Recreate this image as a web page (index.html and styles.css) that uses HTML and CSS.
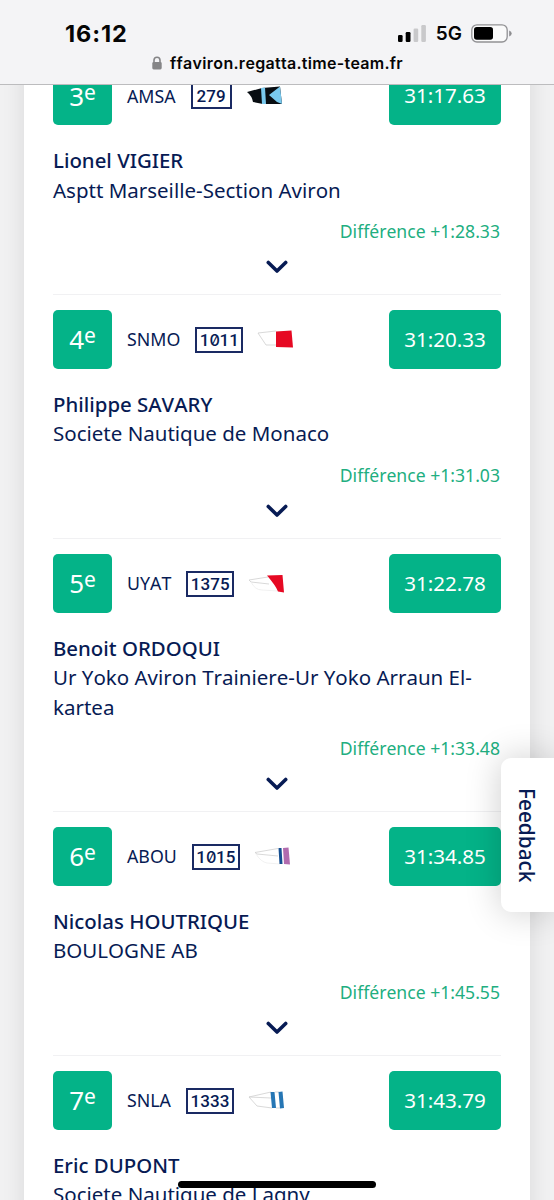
FILE: index.html
```
<!DOCTYPE html>
<html lang="fr">
<head>
<meta charset="utf-8">
<title>Résultats</title>
<link rel="stylesheet" href="styles.css">
</head>
<body>
<div class="screen">
  <header class="browser-bar">
    <div class="status">
      <span class="clock">16:12</span>
      <div class="indicators">
        <svg class="signal" width="28" height="17" viewBox="0 0 28 17"><rect x="0" y="10" width="4.6" height="7" rx="1.2"/><rect x="7.7" y="7" width="4.8" height="10" rx="1.2"/><rect x="15.6" y="3.5" width="4.6" height="13.500" rx="1.2" fill="#c9c9cb"/><rect x="23.300" y="0" width="4.600" height="17" rx="1.2" fill="#c9c9cb"/></svg>
        <span class="network">5G</span>
        <svg class="battery" width="41" height="19" viewBox="0 0 41 19"><rect x=".8" y=".8" width="35.400" height="17.200" rx="5.200" fill="#fafafa" stroke="#919194" stroke-width="1.300"/><rect x="3" y="3" width="19" height="12.800" rx="2.800"/><path d="M38.200 6.500q2.500 1 2.500 3t-2.500 3z" fill="#8d8d90"/></svg>
      </div>
    </div>
    <div class="address">
      <svg width="10" height="14" viewBox="0 0 10 14"><path d="M2 7V4.200a3 3 0 0 1 6 0V7" fill="none" stroke="#858587" stroke-width="1.600"/><rect x=".3" y="6" width="9.400" height="7.500" rx="1.400" fill="#858587"/></svg>
      <span class="url">ffaviron.regatta.time-team.fr</span>
    </div>
  </header>

  <main class="card">
    <article class="result">
      <div class="summary">
        <div class="rank"><span>3<sup>e</sup></span></div>
        <span class="code">AMSA</span>
        <span class="bib short">279</span>
        <svg class="blade" width="37" height="22" viewBox="0 0 37 22"><path d="M1 7L16 3L34 1.500L36 19L17 19L7 17Q6 11 1 7Z" fill="#080d12"/><path d="M15 3L19 2.500L20 19L16 19ZM34 1.500L36 19L31 17L23 10Z" fill="#79c9ee"/></svg>
        <span class="time">31:17.63</span>
      </div>
      <div class="crew"><span class="name">Lionel VIGIER</span><span class="club">Asptt Marseille-Section Aviron</span></div>
      <span class="gap">Différence +1:28.33</span>
      <svg class="chevron" width="22" height="14" viewBox="0 0 22 14"><path d="M2.300 2.500L11 11L19.700 2.500"/></svg>
    </article>

    <article class="result">
      <div class="summary">
        <div class="rank"><span>4<sup>e</sup></span></div>
        <span class="code">SNMO</span>
        <span class="bib">1<span class="zero">0</span>11</span>
        <svg class="blade" width="37" height="22" viewBox="0 0 37 22"><path class="outline" d="M19 3L1 5L3 8L5 11L9 17L19 17"/><path d="M19 3.500L34.500 2.500L36 19.500L19 19Z" fill="#e60923"/></svg>
        <span class="time">31:20.33</span>
      </div>
      <div class="crew"><span class="name">Philippe SAVARY</span><span class="club">Societe Nautique de Monaco</span></div>
      <span class="gap">Différence +1:31.03</span>
      <svg class="chevron" width="22" height="14" viewBox="0 0 22 14"><path d="M2.300 2.500L11 11L19.700 2.500"/></svg>
    </article>

    <article class="result">
      <div class="summary">
        <div class="rank"><span>5<sup>e</sup></span></div>
        <span class="code">UYAT</span>
        <span class="bib">1375</span>
        <svg class="blade" width="37" height="22" viewBox="0 0 37 22"><path class="outline" d="M20 5L1 8L3 10L21 12"/><path class="outline faint" d="M3 10Q7 18 14 18L30 19"/><path d="M19 3.500L34.500 3L36 20.500L30 19.500Q28 14 19 3.500Z" fill="#e60923"/></svg>
        <span class="time">31:22.78</span>
      </div>
      <div class="crew"><span class="name">Benoit ORDOQUI</span><span class="club">Ur Yoko Aviron Trainiere-Ur Yoko Arraun El-<br>kartea</span></div>
      <span class="gap">Différence +1:33.48</span>
      <svg class="chevron" width="22" height="14" viewBox="0 0 22 14"><path d="M2.300 2.500L11 11L19.700 2.500"/></svg>
    </article>

    <article class="result">
      <div class="summary">
        <div class="rank"><span>6<sup>e</sup></span></div>
        <span class="code">ABOU</span>
        <span class="bib">1<span class="zero">0</span>15</span>
        <svg class="blade" width="37" height="22" viewBox="0 0 37 22"><path class="outline" d="M24 3.500L1 7.500L3 9L24 11"/><path class="outline faint" d="M2 9Q7 17 13 18L26 19"/><path d="M24.500 3L27.500 3L28.500 19L25.500 19Z" fill="#164f91"/><path d="M29 3L34.500 2.500L36 19.500L30 19Z" fill="#b16bae"/></svg>
        <span class="time">31:34.85</span>
      </div>
      <div class="crew"><span class="name">Nicolas HOUTRIQUE</span><span class="club">BOULOGNE AB</span></div>
      <span class="gap">Différence +1:45.55</span>
      <svg class="chevron" width="22" height="14" viewBox="0 0 22 14"><path d="M2.300 2.500L11 11L19.700 2.500"/></svg>
    </article>

    <article class="result">
      <div class="summary">
        <div class="rank"><span>7<sup>e</sup></span></div>
        <span class="code">SNLA</span>
        <span class="bib">1333</span>
        <svg class="blade" width="37" height="22" viewBox="0 0 37 22"><path class="outline" d="M23 3L1 8L23 9M1 8L9 17L24 19M27 3H31M28 19H32"/><path d="M22.500 3L26.500 3L28 19L24 19ZM30.500 3L34.500 2.500L36 19L32 19.500Z" fill="#2676b4"/></svg>
        <span class="time">31:43.79</span>
      </div>
      <div class="crew"><span class="name">Eric DUPONT</span><span class="club">Societe Nautique de Lagny</span></div>
    </article>
  </main>

  <button class="feedback"><span>Feedback</span></button>
  <div class="home-indicator"></div>
</div>
</body>
</html>
```
FILE: styles.css
```
* { box-sizing: border-box; }

body {
  margin: 0;
  background: #fff;
  color: #071b54;
  font-family: "Noto Sans", "Open Sans", sans-serif;
  font-kerning: none;
}

.screen {
  position: relative;
  display: flex;
  flex-direction: column;
  height: 1200px;
  overflow: hidden;
  background: #f1f1f2;
}

.browser-bar {
  position: relative;
  z-index: 2;
  flex: 0 0 85px;
  display: flex;
  flex-direction: column;
  background: #f4f4f6;
  border-bottom: 1px solid #bcbcbe;
  color: #050505;
  font-family: Inter, sans-serif;
}

.status {
  display: flex;
  align-items: center;
  justify-content: space-between;
  height: 50px;
  padding: 17px 42px 0 65px;
}

.clock { font-size: 23.5px; font-weight: 700; line-height: 30px; letter-spacing: 0.9px; }
.indicators { display: flex; align-items: center; }
.network { margin: 1px 9px 0 10px; font-size: 19px; font-weight: 600; line-height: 22px; }

.address {
  display: flex;
  align-items: center;
  justify-content: center;
  gap: 8px;
  height: 25px;
  padding-left: 1px;
}

.url { font-size: 16px; font-weight: 600; letter-spacing: 0.3px; }

.card {
  flex: none;
  margin: -35px 24px 0;
  padding: 0 29px;
  background: #fff;
  box-shadow: 0 0 22px rgba(0, 0, 0, 0.1);
}

.result {
  display: flex;
  flex-direction: column;
  padding: 15px 0 20px;
  border-top: 1px solid #f1f1f3;
}

.summary { display: flex; align-items: center; height: 59px; }

.rank {
  display: flex;
  align-items: center;
  justify-content: center;
  width: 59px;
  height: 59px;
  margin-right: 15px;
  border-radius: 5px;
  background: #04b388;
  color: #fff;
  font-size: 26px;
  line-height: 1;
}

.rank sup { font-size: 21px; line-height: 0; vertical-align: 6px; }

.code { font-size: 17.8px; line-height: 26px; }

.bib {
  flex: none;
  width: 48px;
  height: 26px;
  margin: 1px 14px 0 15px;
  border: 2px solid #1a2a63;
  font-family: Roboto, sans-serif;
  font-size: 17px;
  font-weight: 500;
  letter-spacing: 0.1px;
  line-height: 22px;
  text-align: center;
}

.bib.short { width: 41px; }

.zero {
  font-family: Inter, sans-serif;
  font-size: 16.2px;
  font-feature-settings: "zero";
  letter-spacing: -0.5px;
}

.outline { fill: none; stroke: #cfcfcf; stroke-width: 0.8; }
.outline.faint { stroke: #ededed; }

.time {
  width: 112px;
  height: 59px;
  margin-left: auto;
  border-radius: 5px;
  background: #04b388;
  color: #fff;
  font-size: 20.6px;
  line-height: 58px;
  text-align: center;
}

.crew { display: flex; flex-direction: column; margin-top: 21px; font-size: 20.5px; line-height: 29.5px; }
.name { font-weight: 500; font-size: 20.4px; }

.gap {
  align-self: flex-end;
  margin-top: 13px;
  padding-right: 1px;
  color: #21ae80;
  font-size: 17.6px;
  line-height: 26px;
}

.chevron { align-self: center; margin: 15.8px 0 0; fill: none; stroke: #071b54; stroke-width: 3.6; stroke-linecap: round; stroke-linejoin: round; }

.feedback {
  position: absolute;
  top: 758px;
  right: 0;
  display: flex;
  align-items: center;
  justify-content: center;
  width: 53px;
  height: 154px;
  padding: 0 2px 0 0;
  border: 0;
  border-radius: 10px 0 0 10px;
  background: #fff;
  box-shadow: 0 0 36px rgba(0, 0, 0, 0.2);
  color: #071b54;
  font: 500 20.8px "Noto Sans", sans-serif;
  writing-mode: vertical-rl;
}

.home-indicator {
  position: absolute;
  top: 1181px;
  left: 178px;
  width: 198px;
  height: 7px;
  border-radius: 4px;
  background: #000;
}
```
